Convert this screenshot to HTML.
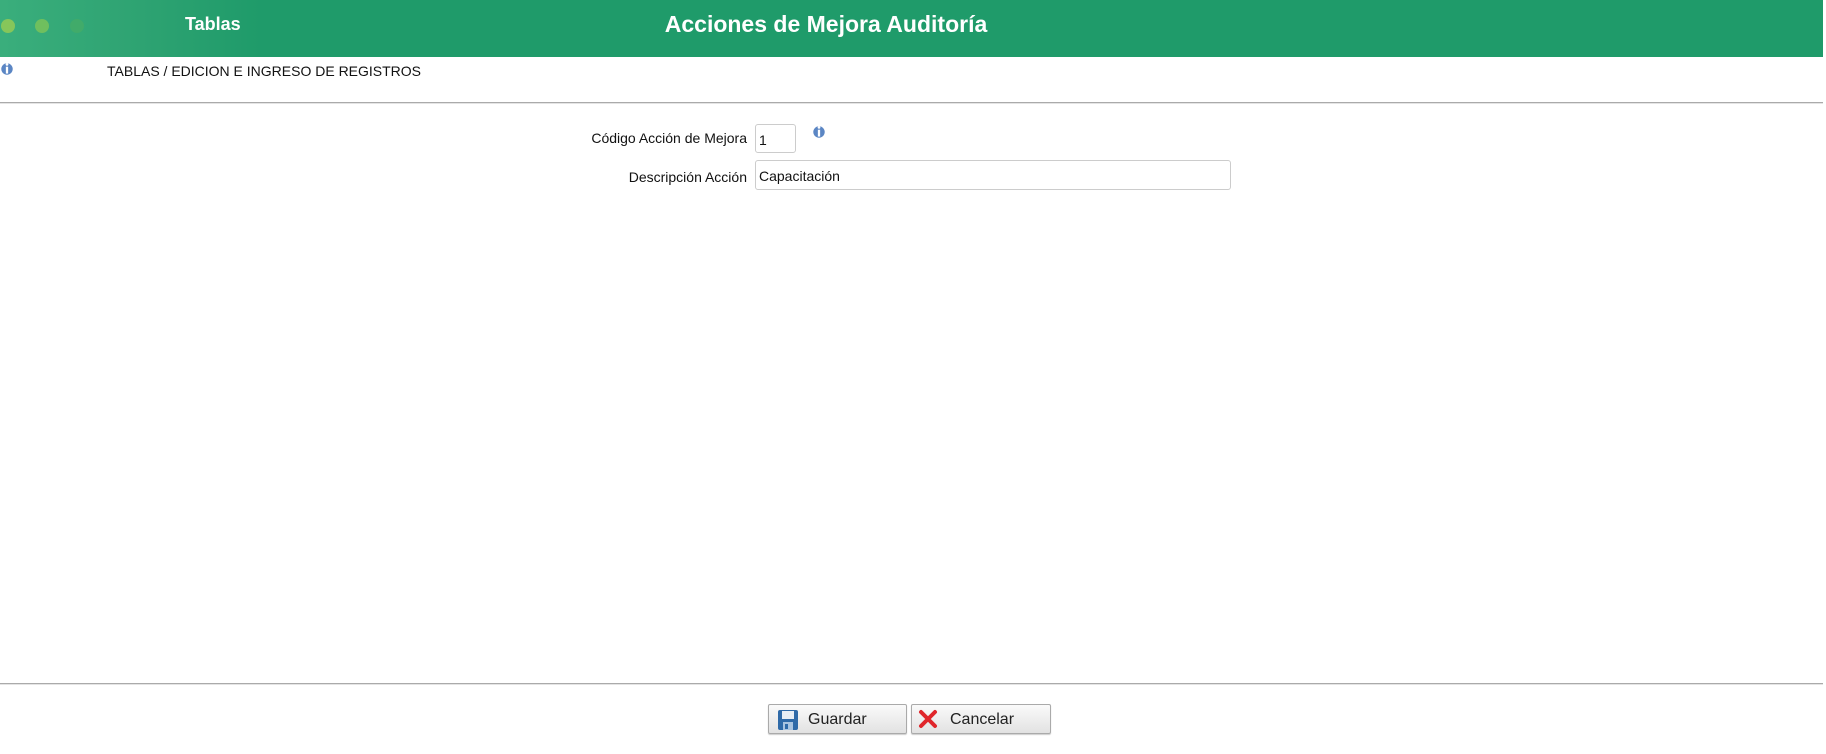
<!DOCTYPE html>
<html><head><meta charset="utf-8"><style>
body{margin:0;width:1826px;height:754px;background:#fff;font-family:"Liberation Sans",sans-serif;position:relative;overflow:hidden}
.hdr{position:absolute;left:0;top:0;width:1823px;height:57px;background:linear-gradient(90deg,#3aae7c 0px,#2ea372 140px,#1f9b6a 260px,#1f9b6a 100%)}
.dot{position:absolute;top:19px;width:14px;height:14px;border-radius:50%}
.t1{position:absolute;left:185px;top:14px;color:#fff;font-weight:bold;font-size:18px}
.t2{position:absolute;left:660px;top:11px;width:332px;text-align:center;color:#fff;font-weight:bold;font-size:23px}
.bc{position:absolute;left:107px;top:63px;font-size:14px;color:#111}
.line{position:absolute;left:0;width:1823px;height:1px;background:#aaa;border-bottom:1px solid #e4e4e4}
.lbl{position:absolute;font-size:14px;color:#111;text-align:right;right:1079px}
.inp{position:absolute;border:1px solid #ccc;border-radius:3px;background:#fff;font-size:14px;color:#111;box-sizing:border-box;padding:7px 0 0 3px}
.btn{position:absolute;top:704px;height:30px;border:1px solid #aaa;border-radius:2px;background:linear-gradient(#fafafa,#e2e2e2);box-sizing:border-box;font-size:16px;color:#222;box-shadow:0 1px 1px #ccc}
.btn span{position:absolute;top:6px}
.info{position:absolute;width:14px;height:16px}
</style></head><body>
<div class="hdr">
<div class="dot" style="left:1px;background:#86c65a"></div>
<div class="dot" style="left:35px;background:#6fbf5e"></div>
<div class="dot" style="left:70px;background:#41ab6a"></div>
<div class="t1">Tablas</div>
<div class="t2">Acciones de Mejora Auditoría</div>
</div>
<svg class="info" style="left:0;top:61px" viewBox="0 0 12 14"><circle cx="6" cy="7" r="5" fill="#5b86c4"/><rect x="5" y="5" width="2" height="6" fill="#fff"/><circle cx="6" cy="3" r="1.2" fill="#fff"/></svg>
<div class="bc">TABLAS / EDICION E INGRESO DE REGISTROS</div>
<div class="line" style="top:102px"></div>
<div class="lbl" style="top:130px">Código Acción de Mejora</div>
<div class="inp" style="left:755px;top:124px;width:41px;height:29px">1</div>
<svg class="info" style="left:812px;top:124px" viewBox="0 0 12 14"><circle cx="6" cy="7" r="5" fill="#5b86c4"/><rect x="5" y="5" width="2" height="6" fill="#fff"/><circle cx="6" cy="3" r="1.2" fill="#fff"/></svg>
<div class="lbl" style="top:169px">Descripción Acción</div>
<div class="inp" style="left:755px;top:160px;width:476px;height:30px">Capacitación</div>
<div class="line" style="top:683px"></div>
<div class="btn" style="left:768px;width:139px">
<svg style="position:absolute;left:8px;top:4px" width="22" height="22" viewBox="0 0 22 22"><rect x="1" y="1" width="20" height="20" rx="2" fill="#2f6aa8"/><rect x="5" y="2" width="12" height="8" fill="#e8eef5"/><rect x="6" y="13" width="10" height="8" fill="#a9c4e0"/><rect x="8" y="15" width="3" height="5" fill="#2f6aa8"/></svg>
<span style="left:39px">Guardar</span></div>
<div class="btn" style="left:911px;width:140px">
<svg style="position:absolute;left:6px;top:4px" width="20" height="20" viewBox="0 0 20 20"><path d="M3 3L17 17M17 3L3 17" stroke="#e0262b" stroke-width="4" stroke-linecap="round"/></svg>
<span style="left:38px">Cancelar</span></div>
</body></html>
